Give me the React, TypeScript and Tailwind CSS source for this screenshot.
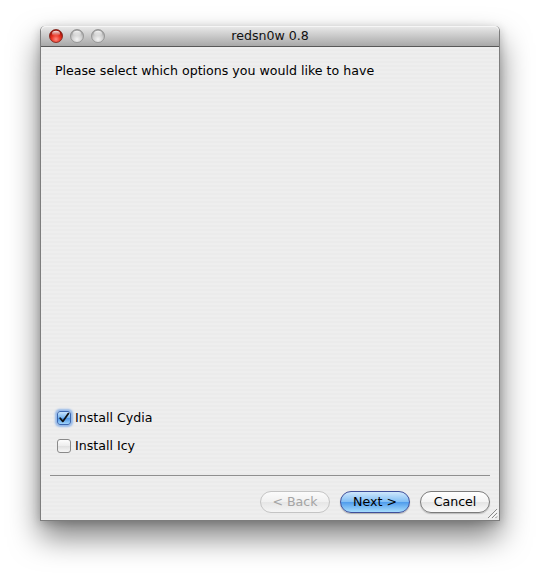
import React from "react";

/**
 * A single window-control light in the title bar.
 */
function Light({ red }: { red?: boolean }) {
    const id = red ? "lr" : "lg";
    return (
        <svg width="14" height="14" viewBox="0 0 14 14" aria-hidden="true">
            <defs>
                <radialGradient id={id} cx="50%" cy="75%" r="65%">
                    {red ? (
                        <>
                            <stop offset="0%" stopColor="#ff8a80" />
                            <stop offset="55%" stopColor="#e8301f" />
                            <stop offset="100%" stopColor="#9c1208" />
                        </>
                    ) : (
                        <>
                            <stop offset="0%" stopColor="#f4f4f4" />
                            <stop offset="60%" stopColor="#cfcfcf" />
                            <stop offset="100%" stopColor="#a4a4a4" />
                        </>
                    )}
                </radialGradient>
                <linearGradient id={`${id}h`} x1="0" y1="0" x2="0" y2="1">
                    <stop offset="0%" stopColor="#fff" stopOpacity="0.9" />
                    <stop offset="100%" stopColor="#fff" stopOpacity="0" />
                </linearGradient>
            </defs>
            <circle cx="7" cy="7" r="6.5" fill={`url(#${id})`} stroke={red ? "#7a1a12" : "#8c8c8c"} strokeWidth="0.8" />
            <ellipse cx="7" cy="4.4" rx="4" ry="2.6" fill={`url(#${id}h)`} />
        </svg>
    );
}

/**
 * Aqua-style checkbox with a label.
 */
function Check({ checked, label }: { checked?: boolean; label: string }) {
    return (
        <div className="flex items-center gap-[4px] h-[16px]">
            {checked ? (
                <div className="w-[14px] h-[14px] rounded-[3px] border border-[#3d68b0] bg-[linear-gradient(#c8e4fb,#73b2ee_50%,#4a93e4_51%,#9fd3fa)] shadow-[0_0_2px_2px_rgba(90,150,230,0.6)] flex items-center justify-center">
                    <svg width="12" height="12" viewBox="0 0 12 12" aria-hidden="true">
                        <path d="M2.2 6.2 L4.8 9.4 L10.4 1.6" fill="none" stroke="#111" strokeWidth="1.8" strokeLinecap="round" strokeLinejoin="round" />
                    </svg>
                </div>
            ) : (
                <div className="w-[14px] h-[14px] rounded-[3px] border border-[#8a8a8a] bg-[linear-gradient(#fdfdfd,#ececec_50%,#e0e0e0_51%,#f6f6f6)]" />
            )}
            <span className="text-[12.6px] text-black leading-none">{label}</span>
        </div>
    );
}

export default function App() {
    return (
        <div className="w-[540px] h-[576px] bg-white pt-[26px] pl-[40px] font-['DejaVu_Sans',sans-serif]">
            <div className="relative w-[460px] h-[495px] flex flex-col rounded-t-[5px] border-x border-b border-[#7d7d7d] shadow-[0_16px_30px_rgba(0,0,0,0.5),0_2px_10px_rgba(0,0,0,0.2)] bg-[#ededed]">
                <div className="h-[21px] shrink-0 relative flex items-center rounded-t-[5px] bg-[linear-gradient(#ebebeb,#c9c9c9_50%,#a8a8a8)] border-b border-[#575757] shadow-[inset_0_1px_0_#f6f6f6]">
                    <div className="flex gap-[7px] pl-[8px]">
                        <Light red />
                        <Light />
                        <Light />
                    </div>
                    <div className="absolute inset-0 flex items-center justify-center text-[12.6px] text-[#111]">
                        redsn0w 0.8
                    </div>
                </div>
                <div className="flex-1 flex flex-col bg-[repeating-linear-gradient(#eeeeee_0px,#eeeeee_2px,#ebebeb_2px,#ebebeb_4px)]">
                    <p className="pl-[14px] pt-[18px] text-[12.6px] text-black leading-none">
                        Please select which options you would like to have
                    </p>
                    <div className="flex-1" />
                    <div className="flex flex-col gap-[12px] pl-[16px]">
                        <Check checked label="Install Cydia" />
                        <Check label="Install Icy" />
                    </div>
                    <div className="mx-[9px] mt-[21px] h-px bg-[#8f8f8f]" />
                    <div className="flex justify-end gap-[10px] pr-[9px] pt-[15px] pb-[7px]">
                        <div className="w-[70px] h-[22px] rounded-full border border-[#c4c4c4] bg-[linear-gradient(#fbfbfb,#f0f0f0_50%,#e6e6e6_51%,#f5f5f5)] flex items-center justify-center text-[12.6px] text-[#a4a4a4]">
                            &lt; Back
                        </div>
                        <div className="w-[70px] h-[22px] rounded-full border border-[#3f4f9a] bg-[linear-gradient(#cfe7fc,#7fbdf4_50%,#4f9cec_51%,#a6dcfd)] flex items-center justify-center text-[12.6px] text-black shadow-[0_1px_1px_rgba(0,0,0,0.25)]">
                            Next &gt;
                        </div>
                        <div className="w-[70px] h-[22px] rounded-full border border-[#7b7b7b] bg-[linear-gradient(#ffffff,#f3f3f3_50%,#e4e4e4_51%,#fafafa)] flex items-center justify-center text-[12.6px] text-black shadow-[0_1px_1px_rgba(0,0,0,0.2)]">
                            Cancel
                        </div>
                    </div>
                </div>
                <svg className="absolute right-[1px] bottom-[1px]" width="11" height="11" viewBox="0 0 11 11" aria-hidden="true">
                    <path d="M10 1 L1 10 M10 5 L5 10 M10 8.5 L8.5 10" stroke="#8a8a8a" strokeWidth="1" />
                    <path d="M10.8 2 L2 10.8 M10.8 6 L6 10.8" stroke="#fff" strokeWidth="0.8" />
                </svg>
            </div>
        </div>
    );
}
